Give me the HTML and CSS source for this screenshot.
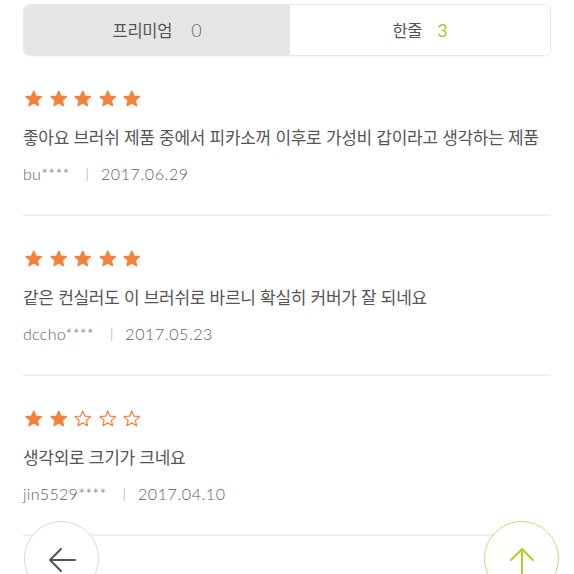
FILE: index.html
```html
<!DOCTYPE html>
<html lang="ko">
<head>
<meta charset="utf-8">
<link rel="stylesheet" href="styles.css">
</head>
<body>
<div class="tabs">
  <div class="tab tab-off">프리미엄<span class="cnt">0</span></div>
  <div class="tab tab-on">한줄<span class="cnt cnt-on">3</span></div>
</div>

<svg width="0" height="0" class="defs">
  <defs>
    <path id="star" d="M12 2.6l2.75 6.2 6.75.65-5.1 4.5 1.5 6.6L12 17.1l-5.9 3.45 1.5-6.6-5.1-4.5 6.75-.65z"/>
  </defs>
</svg>

<div class="review">
  <div class="stars">
    <svg class="star"><use href="#star"/></svg>
    <svg class="star"><use href="#star"/></svg>
    <svg class="star"><use href="#star"/></svg>
    <svg class="star"><use href="#star"/></svg>
    <svg class="star"><use href="#star"/></svg>
  </div>
  <p class="text">좋아요 브러쉬 제품 중에서 피카소꺼 이후로 가성비 갑이라고 생각하는 제품</p>
  <p class="meta"><span class="user">bu****</span><span class="bar">|</span><span class="date">2017.06.29</span></p>
</div>

<div class="review">
  <div class="stars">
    <svg class="star"><use href="#star"/></svg>
    <svg class="star"><use href="#star"/></svg>
    <svg class="star"><use href="#star"/></svg>
    <svg class="star"><use href="#star"/></svg>
    <svg class="star"><use href="#star"/></svg>
  </div>
  <p class="text">같은 컨실러도 이 브러쉬로 바르니 확실히 커버가 잘 되네요</p>
  <p class="meta"><span class="user">dccho****</span><span class="bar">|</span><span class="date">2017.05.23</span></p>
</div>

<div class="review">
  <div class="stars">
    <svg class="star"><use href="#star"/></svg>
    <svg class="star"><use href="#star"/></svg>
    <svg class="star empty"><use href="#star"/></svg>
    <svg class="star empty"><use href="#star"/></svg>
    <svg class="star empty"><use href="#star"/></svg>
  </div>
  <p class="text">생각외로 크기가 크네요</p>
  <p class="meta"><span class="user">jin5529****</span><span class="bar">|</span><span class="date">2017.04.10</span></p>
</div>

<div class="fab fab-back">
  <svg viewBox="0 0 40 40" class="fab-icon"><path d="M33 21H9M19 10L8 21l11 11" fill="none" stroke="#555" stroke-width="2" stroke-linecap="round" stroke-linejoin="round"/></svg>
</div>
<div class="fab fab-top">
  <svg viewBox="0 0 40 40" class="fab-icon"><path d="M20 38V10M9 21L20 10l11 11" fill="none" stroke="#b8cc22" stroke-width="2" stroke-linecap="round" stroke-linejoin="round"/></svg>
</div>
</body>
</html>
```

FILE: styles.css
```css
html, body {
  margin: 0;
  background: #fff;
}
body {
  padding: 4px 23px 0 23px;
  font-family: "Noto Sans CJK KR", "Noto Sans", sans-serif;
  color: #555;
  overflow: hidden;
  height: 570px;
}
.defs {
  position: absolute;
}
.tabs {
  display: flex;
  height: 52px;
  box-sizing: border-box;
  border: 1px solid #e8e8e8;
  border-radius: 7px;
  overflow: hidden;
  box-shadow: 0 1px 2px rgba(0,0,0,0.04);
}
.tab {
  flex: 1;
  display: flex;
  align-items: center;
  justify-content: center;
  font-size: 16.5px;
  color: #555;
  letter-spacing: -0.2px;
}
.tab-off {
  background: #e6e6e6;
  flex: 0 0 266px;
}
.tab-on {
  background: #fff;
}
.cnt {
  margin-left: 19px;
  font-family: "Lato", sans-serif;
  font-weight: 300;
  font-size: 18px;
  color: #666;
}
.cnt-on {
  margin-left: 15px;
  color: #a9c72a;
  font-weight: 400;
}
.review {
  padding: 33px 0 29px;
  border-bottom: 2px solid #efefef;
}
.stars {
  display: flex;
  gap: 5px;
  height: 19px;
  margin-left: 1px;
}
.star {
  width: 19.5px;
  height: 19.5px;
  fill: #f5823a;
  stroke: #f5823a;
  stroke-width: 1.6;
  stroke-linejoin: round;
}
.star.empty {
  fill: #fff;
  stroke-width: 1.5;
}
.star use {
  transform: scale(0.8125);
}
.text {
  margin: 17px 0 0;
  font-size: 17px;
  line-height: 24px;
  letter-spacing: -0.3px;
  color: #555;
  white-space: nowrap;
}
.meta {
  margin: 14px 0 0;
  font-size: 16px;
  line-height: 22px;
  color: #5e5e5e;
  display: flex;
  align-items: center;
  font-family: "Lato", "Noto Sans", sans-serif;
  font-weight: 300;
}
.user {
  letter-spacing: 0.3px;
}
.bar {
  margin: 0 12px 0 16px;
  color: #9a9a9a;
  font-size: 14px;
  font-weight: 300;
}
.date {
  letter-spacing: 0.6px;
  font-size: 16px;
}
.fab {
  position: fixed;
  top: 521px;
  width: 75px;
  height: 75px;
  border-radius: 50%;
  background: #fff;
  box-sizing: border-box;
  display: flex;
  align-items: center;
  justify-content: center;
}
.fab-back {
  left: 24px;
  border: 1px solid #d8d8d8;
}
.fab-top {
  left: 484px;
  border: 1px solid #c8da6e;
}
.fab-icon {
  width: 40px;
  height: 40px;
}
```
